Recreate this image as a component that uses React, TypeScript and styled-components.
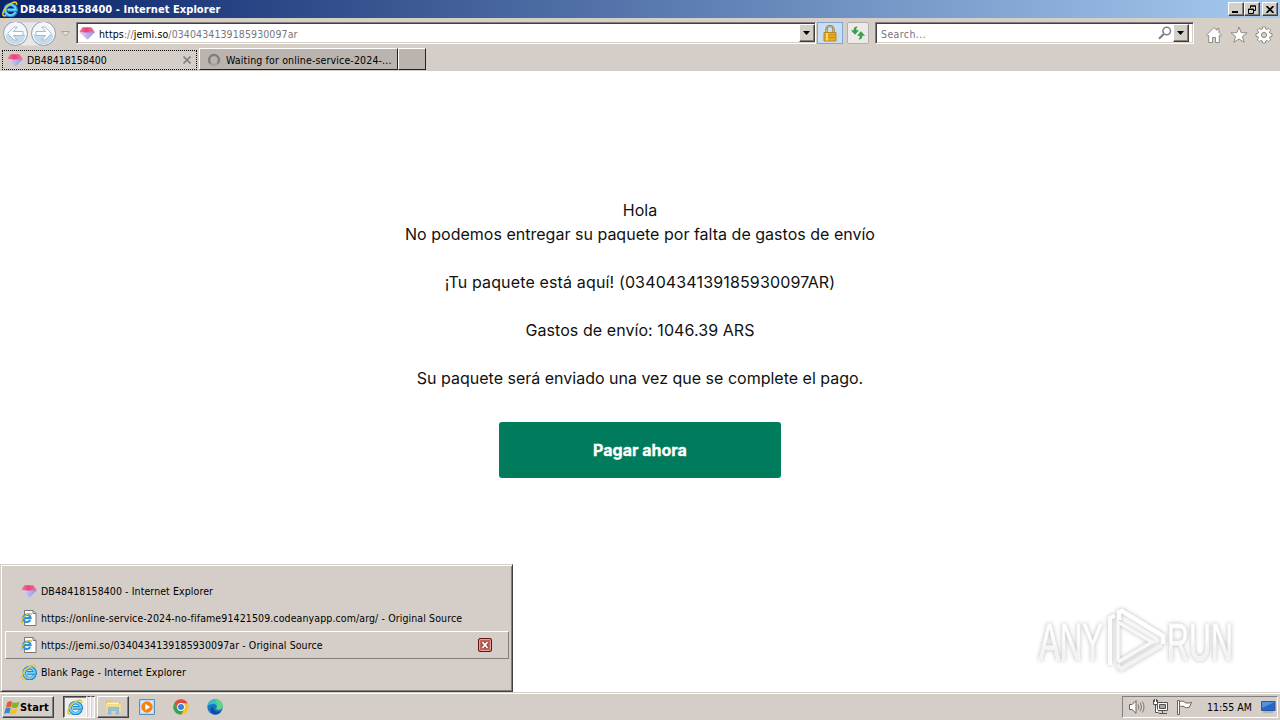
import React from "react";
import styled, { createGlobalStyle, css } from "styled-components";

const GlobalStyle = createGlobalStyle`
    * {
        box-sizing: border-box;
    }

    body {
        margin: 0;
        overflow: hidden;
        background: #fff;
    }

    svg {
        display: block;
        flex: none;
    }
`;

const raised = css`
    border: 1px solid;
    border-color: #fff #404040 #404040 #fff;
    box-shadow: inset -1px -1px 0 #808080;
`;

const Desktop = styled.div`
    position: relative;
    display: flex;
    flex-direction: column;
    width: 1280px;
    height: 720px;
    background: #fff;
    color: #000;
    font-family: "DejaVu Sans Condensed", "DejaVu Sans", sans-serif;
    font-stretch: condensed;
    font-size: 10.5px;
    line-height: 14px;
    white-space: nowrap;
`;

const Label = styled.span<{ $spacing?: number }>`
    letter-spacing: ${({ $spacing }) => $spacing ?? 0}px;
`;

const TitleBar = styled.header`
    display: flex;
    align-items: center;
    height: 18px;
    padding: 0 2px;
    background: linear-gradient(90deg, #0a246a, #a6caf0);
`;

const Title = styled.h1`
    flex: 1;
    margin: 1px 0 0 2px;
    color: #fff;
    font-size: 11px;
    font-weight: bold;
    letter-spacing: 0.06px;
`;

const WindowButton = styled.button<{ $gap?: number }>`
    ${raised}
    display: flex;
    align-items: center;
    justify-content: center;
    width: 16px;
    height: 14px;
    margin-left: ${({ $gap }) => $gap ?? 0}px;
    padding: 0;
    background: #d4d0c8;
`;

const Toolbar = styled.div`
    display: flex;
    align-items: flex-start;
    height: 30px;
    padding: 4px 7px 0 2px;
    background: #d5cfc8;
`;

const Field = styled.div<{ $width: number; $gap: number; $end: number }>`
    display: flex;
    align-items: center;
    width: ${({ $width }) => $width}px;
    height: 22px;
    margin-left: ${({ $gap }) => $gap}px;
    padding: 0 ${({ $end }) => $end}px 0 2px;
    border: 1px solid;
    border-color: #808080 #fff #fff #808080;
    box-shadow: inset 1px 1px 0 #404040, inset -1px -1px 0 #d4d0c8;
    background: #fff;
`;

const FieldText = styled.span<{ $spacing: number; $indent: number }>`
    flex: 1;
    margin: 1px 0 0 ${({ $indent }) => $indent}px;
    color: #76767a;
    letter-spacing: ${({ $spacing }) => $spacing}px;

    b {
        color: #000;
        font-weight: normal;
    }
`;

const DropButton = styled.button`
    ${raised}
    display: flex;
    align-items: center;
    justify-content: center;
    width: 16px;
    height: 18px;
    padding: 0 1px 1px 0;
    background: #d4d0c8;
`;

const ToolButton = styled.button<{ $active?: boolean }>`
    display: flex;
    align-items: center;
    justify-content: center;
    width: ${({ $active }) => ($active ? 26 : 22)}px;
    height: 22px;
    margin-left: ${({ $active }) => ($active ? 1 : 4)}px;
    padding: 0;
    border: 1px solid ${({ $active }) => ($active ? "#7da7d9" : "#b0b0b0")};
    border-radius: ${({ $active }) => ($active ? 0 : 2)}px;
    background: ${({ $active }) => ($active ? "#c9def5" : "#eceae8")};
`;

const CommandIcons = styled.div`
    display: flex;
    gap: 7px;
    margin: 4px 0 0 auto;
`;

const TabStrip = styled.nav`
    display: flex;
    align-items: flex-end;
    height: 23px;
    padding: 0 0 1px 2px;
    background: #d5cec8;
`;

const ActiveTab = styled.div`
    display: flex;
    align-items: center;
    width: 195px;
    height: 20px;
    margin-right: 2px;
    padding: 0 5px 0 4px;
    border: 1px dotted #000;
`;

const InactiveTab = styled.div<{ $width: number }>`
    display: flex;
    align-items: center;
    width: ${({ $width }) => $width}px;
    height: 22px;
    padding: 1px 0 0 7px;
    border: 1px solid;
    border-color: #fff #222 #222 #fff;
    background: #bab3ae;
`;

const TabLabel = styled(Label)<{ $indent: number }>`
    flex: 1;
    margin-left: ${({ $indent }) => $indent}px;
`;

const Page = styled.main`
    display: flex;
    flex: 1;
    flex-direction: column;
    align-items: center;
    padding-top: 127px;
    font-family: Inter, sans-serif;
`;

const Message = styled.p<{ $spacing?: number }>`
    min-height: 24px;
    margin: 0;
    color: #111;
    font-size: 16px;
    line-height: 24px;
    letter-spacing: ${({ $spacing }) => $spacing ?? 0}px;
`;

const PayButton = styled.button`
    width: 282px;
    height: 56px;
    margin-top: 32px;
    padding: 0;
    border: 0;
    border-radius: 3px;
    background: #007b5c;
    color: #fff;
    font: bold 16px/24px Inter, sans-serif;
    -webkit-text-stroke: 0.3px #fff;
`;

const Watermark = styled.div`
    position: absolute;
    top: 600px;
    left: 1026px;
`;

const WindowList = styled.ul`
    position: absolute;
    bottom: 28px;
    left: 0;
    width: 513px;
    height: 128px;
    margin: 0;
    padding: 12px 3px 0;
    border: 1px solid;
    border-color: #d4d0c8 #404040 #404040 #d4d0c8;
    box-shadow: inset 1px 1px 0 #fff, inset -1px -1px 0 #808080;
    background: #d5cec8;
    list-style: none;
`;

const WindowRow = styled.li<{ $selected?: boolean }>`
    display: flex;
    align-items: center;
    height: ${({ $selected }) => ($selected ? 28 : 27)}px;
    margin-bottom: ${({ $selected }) => ($selected ? -1 : 0)}px;
    margin-left: 1px;
    padding: 0 16px 0 15px;
    border: 1px solid;
    border-color: ${({ $selected }) =>
        $selected ? "#fff #808080 #808080 #fff" : "transparent"};

    span {
        flex: 1;
        margin-left: 4px;
    }
`;

const Taskbar = styled.footer`
    display: flex;
    align-items: flex-start;
    height: 28px;
    padding: 2px 2px 0;
    border-top: 1px solid #d4d0c8;
    box-shadow: inset 0 1px 0 #fff;
    background: #d5cec8;
`;

const StartButton = styled.button`
    ${raised}
    display: flex;
    align-items: center;
    width: 52px;
    height: 22px;
    margin-top: 1px;
    padding: 1px 0 0 1px;
    background: #d5cec8;
    color: #000;
    font: bold 11px/14px "DejaVu Sans Condensed", sans-serif;
    letter-spacing: 0.15px;
`;

const TaskButton = styled.button<{ $pressed?: boolean }>`
    ${raised}
    display: flex;
    align-items: center;
    justify-content: center;
    width: ${({ $pressed }) => ($pressed ? 24 : 32)}px;
    height: 22px;
    margin: 1px 0 0 ${({ $pressed }) => ($pressed ? 9 : 2)}px;
    padding: 0;
    background: #d5cec8;
    ${({ $pressed }) =>
        $pressed &&
        css`
            border-color: #404040 #fff #fff #404040;
            box-shadow: inset 1px 1px 0 #808080;
            background: #f0edea;
        `}
`;

const StackEdge = styled.div`
    width: 4px;
    height: 22px;
    margin-top: 1px;
    border: 1px solid;
    border-color: #404040 #fff #fff #d5cec8;
    background: #ece8e4;
`;

const Pinned = styled.div`
    display: flex;
    gap: 18px;
    margin: 4px 0 0 10px;
`;

const Tray = styled.div`
    display: flex;
    align-items: center;
    width: 156px;
    height: 22px;
    margin: 1px 0 0 auto;
    padding: 0 1px 0 5px;
    border: 1px solid;
    border-color: #808080 #fff #fff #808080;
    gap: 7px;
`;

const Clock = styled(Label)`
    margin-left: 7px;
    margin-right: auto;
`;

const IeGlyph = ({ size = 16 }: { size?: number }) => (
    <svg width={size} height={size} viewBox="0 0 16 16" fill="none">
        <path
            d="M13.900 11A5.500 5.500 0 1 1 14.200 8.900H6"
            stroke="#1f86cf"
            strokeWidth="3.600"
        />
        <path
            d="M13.400 11A5.300 5.300 0 1 1 13.800 8.900H5.200"
            stroke="#6fd0f7"
            strokeWidth="1.900"
        />
        <path
            d="M4.200 14.400C-.6 16.400-.2 11 4.600 5.800 9 1 15.400-.8 14.600 3.800"
            stroke="#e6c83a"
            strokeWidth="1.600"
        />
    </svg>
);

const IePageIcon = () => (
    <svg width="16" height="16" viewBox="0 0 16 16" fill="none">
        <path d="M3.500.5h8.500l3 3v12H3.500z" fill="#fff" stroke="#777" />
        <path d="M12 .5v3h3" stroke="#777" />
        <path
            d="M9.200 10A3.700 3.700 0 1 1 9.600 8.200H3"
            stroke="#2a93dc"
            strokeWidth="2.200"
        />
        <path
            d="M2 12.600C-1.200 12.800 2 7.600 5.200 5 8 2.900 11 2.700 10.200 5"
            stroke="#dfb925"
            strokeWidth="1.200"
        />
    </svg>
);

const GemIcon = () => (
    <svg width="16" height="16" viewBox="0 0 16 16">
        <defs>
            <linearGradient id="gemTop" x1="0" y1="0" x2="1" y2="0">
                <stop offset="0" stopColor="#f27f9c" />
                <stop offset=".45" stopColor="#ee3f74" />
                <stop offset="1" stopColor="#f27a96" />
            </linearGradient>
            <linearGradient id="gemBase" x1="0" y1="0" x2="1" y2="0">
                <stop offset="0" stopColor="#f0d5e6" />
                <stop offset=".5" stopColor="#b9b3f0" />
                <stop offset="1" stopColor="#8894ea" />
            </linearGradient>
        </defs>
        <path d="M.3 7L2.800 3q.5-.7 1.300-.7h7.600q.8 0 1.300.7L15.800 7l-1 1.500H2z" fill="url(#gemTop)" />
        <path d="M.3 7q4.700.6 8.700.4 4 0 6.800-.4l-6.400 7q-.9.900-1.800 0z" fill="url(#gemBase)" />
    </svg>
);

const NavButtons = () => (
    <svg width="56" height="26" viewBox="0 0 56 26">
        <path d="M13 .5h30v23H13z" fill="#e9e8e7" />
        {[13.5, 41.5].map((x, i) => (
            <g key={x} transform={`translate(${x} 11.500) scale(${i ? -1 : 1} 1)`}>
                <circle r="12" fill="#f3f7fb" stroke="#8c9cab" />
                <path d="M-10 1a10 10 0 0 0 20 0z" fill="#c5daeb" />
                <path
                    d="M-8 0l6.500-6.500h3.200L-2.200-2H7.500v4h-9.700l3.900 4.500h-3.200z"
                    fill="#fff"
                    stroke="#9fb3c5"
                    strokeWidth=".9"
                />
            </g>
        ))}
    </svg>
);

const Caret = () => (
    <svg width="7" height="4" viewBox="0 0 7 4">
        <path d="M0 0h7L3.500 4z" fill="#000" />
    </svg>
);

const LockIcon = () => (
    <svg width="14" height="17" viewBox="0 0 14 17" fill="none">
        <path d="M3.500 8V4.500a3.500 3.500 0 0 1 7 0V8" stroke="#8b7436" strokeWidth="2.200" />
        <path d="M3.500 8V4.500a3.500 3.500 0 0 1 7 0V8" stroke="#dec991" strokeWidth=".8" />
        <path d="M1 7.500h12v8.500H1z" fill="#e9ab20" stroke="#b98724" />
        <path d="M1.500 10h11M1.500 12.500h11" stroke="#c9901d" />
        <path d="M4 8v7.500" stroke="#ffdc68" strokeWidth="2" />
    </svg>
);

const RefreshIcon = () => (
    <svg width="16" height="16" viewBox="0 0 16 16" fill="#35a14b">
        <path d="M7.500 1.600C4.800 1.300 3.600 2.800 3.600 5.300H1l4 4.500 4-4.500H6.300c0-1.500.1-2.400 1.200-3.700z" />
        <path d="M8.500 14.400c2.700.3 3.900-1.200 3.900-3.700H15l-4-4.500-4 4.500h2.700c0 1.500-.1 2.400-1.200 3.700z" />
    </svg>
);

const SearchIcon = () => (
    <svg width="15" height="14" viewBox="0 0 15 14" fill="none" stroke="#808086">
        <circle cx="8.700" cy="5" r="3.800" strokeWidth="1.500" />
        <path d="M5.800 8L1 12.800" strokeWidth="2.200" />
    </svg>
);

const HomeIcon = () => (
    <svg width="18" height="18" viewBox="0 0 18 18">
        <path
            d="M9 1.500L1.500 9l1.200 1.300 1-.9v7.100h3.800v-5h3v5h3.800V9.400l1 .9L16.500 9 14 6.500V2.500h-2v2z"
            fill="#fff"
            stroke="#8f8b87"
        />
    </svg>
);

const StarIcon = () => (
    <svg width="18" height="18" viewBox="0 0 18 18">
        <path
            d="M9 1l2.100 5.600 6 .2-4.700 3.700 1.700 5.800L9 13l-5.100 3.300 1.700-5.800L.9 6.800l6-.2z"
            fill="#fff"
            stroke="#8f8b87"
        />
    </svg>
);

const GearIcon = () => (
    <svg width="18" height="18" viewBox="0 0 18 18">
        <path
            d="M7.600 1h2.800l.4 2.200 1 .4 1.900-1.300 2 2-1.300 1.900.4 1 2.200.4v2.800l-2.200.4-.4 1 1.300 1.900-2 2-1.900-1.300-1 .4-.4 2.200H7.600l-.4-2.200-1-.4-1.900 1.300-2-2 1.300-1.900-.4-1L1 10.400V7.600l2.200-.4.4-1-1.300-1.900 2-2 1.900 1.300 1-.4z"
            fill="#fff"
            stroke="#8f8b87"
        />
        <circle cx="9" cy="9" r="2.600" fill="#d5cec8" stroke="#8f8b87" />
    </svg>
);

const SpinnerIcon = () => (
    <svg width="14" height="14" viewBox="0 0 14 14" fill="none">
        <circle cx="7" cy="7" r="5" stroke="#a8a29e" strokeWidth="2.400" />
        <path d="M3.500 10.500a5 5 0 1 1 7 0" stroke="#857f7c" strokeWidth="2.200" />
    </svg>
);

const CloseRowIcon = () => (
    <svg width="14" height="14" viewBox="0 0 14 14">
        <rect x=".5" y=".5" width="13" height="13" rx="1.500" fill="#c8605a" stroke="#5e1714" />
        <rect x="1.500" y="1.500" width="11" height="11" rx="1" fill="none" stroke="#e5a29c" />
        <path d="M4.500 4.200l5 5.600M9.500 4.200l-5 5.600" stroke="#7b302b" strokeWidth="3.400" />
        <path d="M4.500 4.200l5 5.600M9.500 4.200l-5 5.600" stroke="#fff" strokeWidth="1.800" />
    </svg>
);

const StartFlag = () => (
    <svg width="16" height="16" viewBox="0 0 17 17">
        <path d="M3.600 2.400c2-1.500 3.800-1.400 5.200-.5L7.400 7.800C5.800 6.900 4 6.900 2 8.200z" fill="#e7582b" />
        <path d="M9.400 2.300c1.700 1 4.200.9 7-.7L14.800 7.200c-2.200 1.400-4.600 1.700-6.900.8z" fill="#78b82d" />
        <path d="M1.700 8.900c2-1.300 3.900-1.200 5.400-.3l-1.500 5.700c-1.700-.9-3.500-.8-5.500.5z" fill="#3787cc" />
        <path d="M7.700 8.900c2 1 4.500.7 6.900-.6l-1.500 5.600c-2.300 1.400-4.700 1.600-6.900.7z" fill="#f4c226" />
    </svg>
);

const FolderIcon = () => (
    <svg width="17" height="16" viewBox="0 0 17 16">
        <path d="M1 1.500h5l1 1.300h8v9H1z" fill="#e5c364" />
        <path d="M2 3.500h12v7H2z" fill="#f8f2d6" />
        <path d="M1 5h15v8.500H1z" fill="#f3dc8c" />
        <path d="M3.500 15V8.500h10V15h-2.300v-3.400H5.800V15z" fill="#8cc6ea" stroke="#5fa2cf" strokeWidth=".5" />
    </svg>
);

const PlayerIcon = () => (
    <svg width="16" height="16" viewBox="0 0 16 16">
        <path d="M.5.500h15v15H.500z" fill="#bfdbf2" stroke="#5a8fbd" />
        <path d="M2.500 2.500h11v11h-11z" fill="#e7f2fb" />
        <circle cx="8" cy="8" r="5.700" fill="#ee8416" />
        <path d="M6.300 4.700v6.600L11.200 8z" fill="#fff" />
    </svg>
);

const ChromeIcon = () => (
    <svg width="16" height="16" viewBox="0 0 16 16">
        <circle cx="8" cy="8" r="7.700" fill="#f2c42d" />
        <path d="M1.300 4.150A7.700 7.700 0 0 1 14.700 4.150H8L4.670 9.900z" fill="#dd4b3e" />
        <path d="M1.300 4.150A7.700 7.700 0 0 0 8 15.700L11.330 9.900H4.670z" fill="#34a35a" />
        <circle cx="8" cy="8" r="3.900" fill="#fff" />
        <circle cx="8" cy="8" r="3" fill="#3c7fe2" />
    </svg>
);

const EdgeIcon = () => (
    <svg width="16" height="16" viewBox="0 0 16 16">
        <circle cx="8" cy="8" r="7.700" fill="#1977c9" />
        <path d="M.4 7.300C1.200 2.700 4.400.3 8 .3c4.600 0 7.700 3.200 7.700 6.500 0 2.800-2.200 4-4.400 4-1.500 0-2.500-.6-1.700-1.700.8-1.200.3-4-3-4C3.700 5.100 1.200 6 .4 7.300z" fill="#37c1c4" />
        <path d="M8 .3c4.600 0 7.700 3.200 7.700 6.500 0 2.800-2.200 4-4.400 4-1.500 0-2.500-.6-1.700-1.700C11 6 9.700 2.500 8 .3z" fill="#62d581" />
        <path d="M6.200 7.200c-1 4 3.100 6.700 8 4.800-2 3.700-6.200 4.300-8.500 2.700-3-2-2.700-6 .5-7.500z" fill="#124b99" />
    </svg>
);

const SpeakerIcon = () => (
    <svg width="17" height="16" viewBox="0 0 17 16" fill="none" stroke="#66625e">
        <path d="M1.500 5.500h2.700L8 1.700v12.600l-3.800-3.800H1.500z" fill="#fff" />
        <path d="M10 5.300q1.600 2.700 0 5.400M12.200 3.700q2.700 4.300 0 8.600M14.400 2.500q3.200 5.500 0 11" strokeWidth=".8" />
    </svg>
);

const NetworkIcon = () => (
    <svg width="17" height="16" viewBox="0 0 17 16" fill="none" stroke="#55514e">
        <path d="M5.500 3.500h10v8h-10z" fill="#fff" />
        <path d="M7.500 5.500h6v4h-6z" fill="#aaa5a0" />
        <path d="M10.500 12v2M7 14.500h8" />
        <path d="M1.500 1v4.500h4V1M2.500 0v3M4.500 0v3M3.500 5.500v8h3" fill="#fff" />
    </svg>
);

const FlagIcon = () => (
    <svg width="17" height="16" viewBox="0 0 17 16" fill="#fff" stroke="#66625e">
        <path d="M1.500 1.500h2v14h-2z" />
        <path d="M3.500 2.500c3-.8 4.500-.3 5.500 1 2 .9 4 .7 6.500-.2L13.500 8c-2 1-4 .9-5.500-.3-1.300-.8-2.700-.7-4.500 0z" />
    </svg>
);

const DesktopIcon = () => (
    <svg width="16" height="14" viewBox="0 0 16 14">
        <path d="M1.500 1.500h13.500v9H1.500z" fill="#2467c4" stroke="#2a569a" />
        <path d="M2 2h12.500L2 8z" fill="#558fdd" />
        <path d="M3 12h10" stroke="#8b97a6" />
    </svg>
);

const AnyRunMark = () => (
    <svg
        width="240"
        height="80"
        viewBox="0 0 240 80"
        fill="none"
        style={{ filter: "drop-shadow(0 0 2px rgba(0, 0, 0, 0.28))" }}
    >
        <defs>
            <linearGradient id="fade" x1="0" y1="0" x2="0" y2="1">
                <stop offset=".45" stopColor="#fff" />
                <stop offset=".65" stopColor="#f2f2f2" />
            </linearGradient>
        </defs>
        <g
            fill="url(#fade)"
            stroke="#f9f9f9"
            strokeWidth="1"
            fontFamily="Liberation Sans, sans-serif"
            fontSize="52"
        >
            <text transform="translate(13 60) scale(.6 1)">ANY</text>
            <text transform="translate(141 60) scale(.585 1)">RUN</text>
        </g>
        <path d="M84 65V18l5-2.500" stroke="#fdfdfd" strokeWidth="4" />
        <path d="M92 61V22l34 20-34 20" stroke="#f8f8f8" strokeWidth="3.500" />
        <path d="M93 20v-8l3-1 41 25v8" stroke="#fff" strokeWidth="4.500" />
        <path d="M91 65l4 4 41-24" stroke="#f2f2f2" strokeWidth="4.500" />
    </svg>
);

const windows = [
    { title: "DB48418158400 - Internet Explorer", icon: <GemIcon />, spacing: 0.09 },
    {
        title: "https://online-service-2024-no-fifame91421509.codeanyapp.com/arg/ - Original Source",
        icon: <IePageIcon />,
        spacing: 0.11,
    },
    {
        title: "https://jemi.so/0340434139185930097ar - Original Source",
        icon: <IePageIcon />,
        spacing: 0.09,
        selected: true,
    },
    { title: "Blank Page - Internet Explorer", icon: <IeGlyph />, spacing: 0.12 },
];

const App: React.FC = () => {
    return (
        <Desktop>
            <GlobalStyle />
            <TitleBar>
                <IeGlyph />
                <Title>DB48418158400 - Internet Explorer</Title>
                <WindowButton>
                    <svg width="8" height="8" viewBox="0 0 8 8">
                        <path d="M0 6h6v2H0z" />
                    </svg>
                </WindowButton>
                <WindowButton>
                    <svg width="8" height="9" viewBox="0 0 8 9" fill="none" stroke="#000">
                        <path d="M2.500 3V1h5v4.500H6M2 1h6M.5 4h5v4.500h-5zM0 4.500h6" />
                    </svg>
                </WindowButton>
                <WindowButton $gap={2}>
                    <svg width="8" height="7" viewBox="0 0 8 7" stroke="#000" strokeWidth="1.600">
                        <path d="M.5 0l7 7M7.500 0l-7 7" />
                    </svg>
                </WindowButton>
            </TitleBar>
            <Toolbar>
                <NavButtons />
                <svg width="15" height="22" viewBox="0 0 15 22">
                    <path d="M3.500 9.500h8L7.500 14z" fill="#e3dfdb" stroke="#aaa5a0" />
                </svg>
                <Field $width={740} $gap={3} $end={0}>
                    <GemIcon />
                    <FieldText $spacing={0.1} $indent={4}>
                        <b>https</b>://<b>jemi.so</b>/0340434139185930097ar
                    </FieldText>
                    <DropButton>
                        <Caret />
                    </DropButton>
                </Field>
                <ToolButton $active>
                    <LockIcon />
                </ToolButton>
                <ToolButton>
                    <RefreshIcon />
                </ToolButton>
                <Field $width={319} $gap={6} $end={4}>
                    <FieldText $spacing={0.4} $indent={3}>
                        Search...
                    </FieldText>
                    <SearchIcon />
                    <DropButton>
                        <Caret />
                    </DropButton>
                </Field>
                <CommandIcons>
                    <HomeIcon />
                    <StarIcon />
                    <GearIcon />
                </CommandIcons>
            </Toolbar>
            <TabStrip>
                <ActiveTab>
                    <GemIcon />
                    <TabLabel $indent={4}>DB48418158400</TabLabel>
                    <svg width="8" height="8" viewBox="0 0 8 8" stroke="#88827e" strokeWidth="1.700">
                        <path d="M.5.500l7 7M7.500.500l-7 7" />
                    </svg>
                </ActiveTab>
                <InactiveTab $width={199}>
                    <SpinnerIcon />
                    <TabLabel $spacing={0.15} $indent={5}>
                        Waiting for online-service-2024-...
                    </TabLabel>
                </InactiveTab>
                <InactiveTab $width={28} />
            </TabStrip>
            <Page>
                <Message>Hola</Message>
                <Message $spacing={0.015}>
                    No podemos entregar su paquete por falta de gastos de envío
                </Message>
                <Message />
                <Message $spacing={0.145}>¡Tu paquete está aquí! (0340434139185930097AR)</Message>
                <Message />
                <Message $spacing={0.07}>Gastos de envío: 1046.39 ARS</Message>
                <Message />
                <Message>Su paquete será enviado una vez que se complete el pago.</Message>
                <PayButton>Pagar ahora</PayButton>
            </Page>
            <Taskbar>
                <StartButton>
                    <StartFlag />
                    Start
                </StartButton>
                <TaskButton $pressed>
                    <IeGlyph />
                </TaskButton>
                <StackEdge />
                <StackEdge />
                <TaskButton>
                    <FolderIcon />
                </TaskButton>
                <Pinned>
                    <PlayerIcon />
                    <ChromeIcon />
                    <EdgeIcon />
                </Pinned>
                <Tray>
                    <SpeakerIcon />
                    <NetworkIcon />
                    <FlagIcon />
                    <Clock>11:55 AM</Clock>
                    <DesktopIcon />
                </Tray>
            </Taskbar>
            <WindowList>
                {windows.map(({ title, icon, spacing, selected }) => (
                    <WindowRow key={title} $selected={selected}>
                        {icon}
                        <Label $spacing={spacing}>{title}</Label>
                        {selected && <CloseRowIcon />}
                    </WindowRow>
                ))}
            </WindowList>
            <Watermark>
                <AnyRunMark />
            </Watermark>
        </Desktop>
    );
};

export default App;
